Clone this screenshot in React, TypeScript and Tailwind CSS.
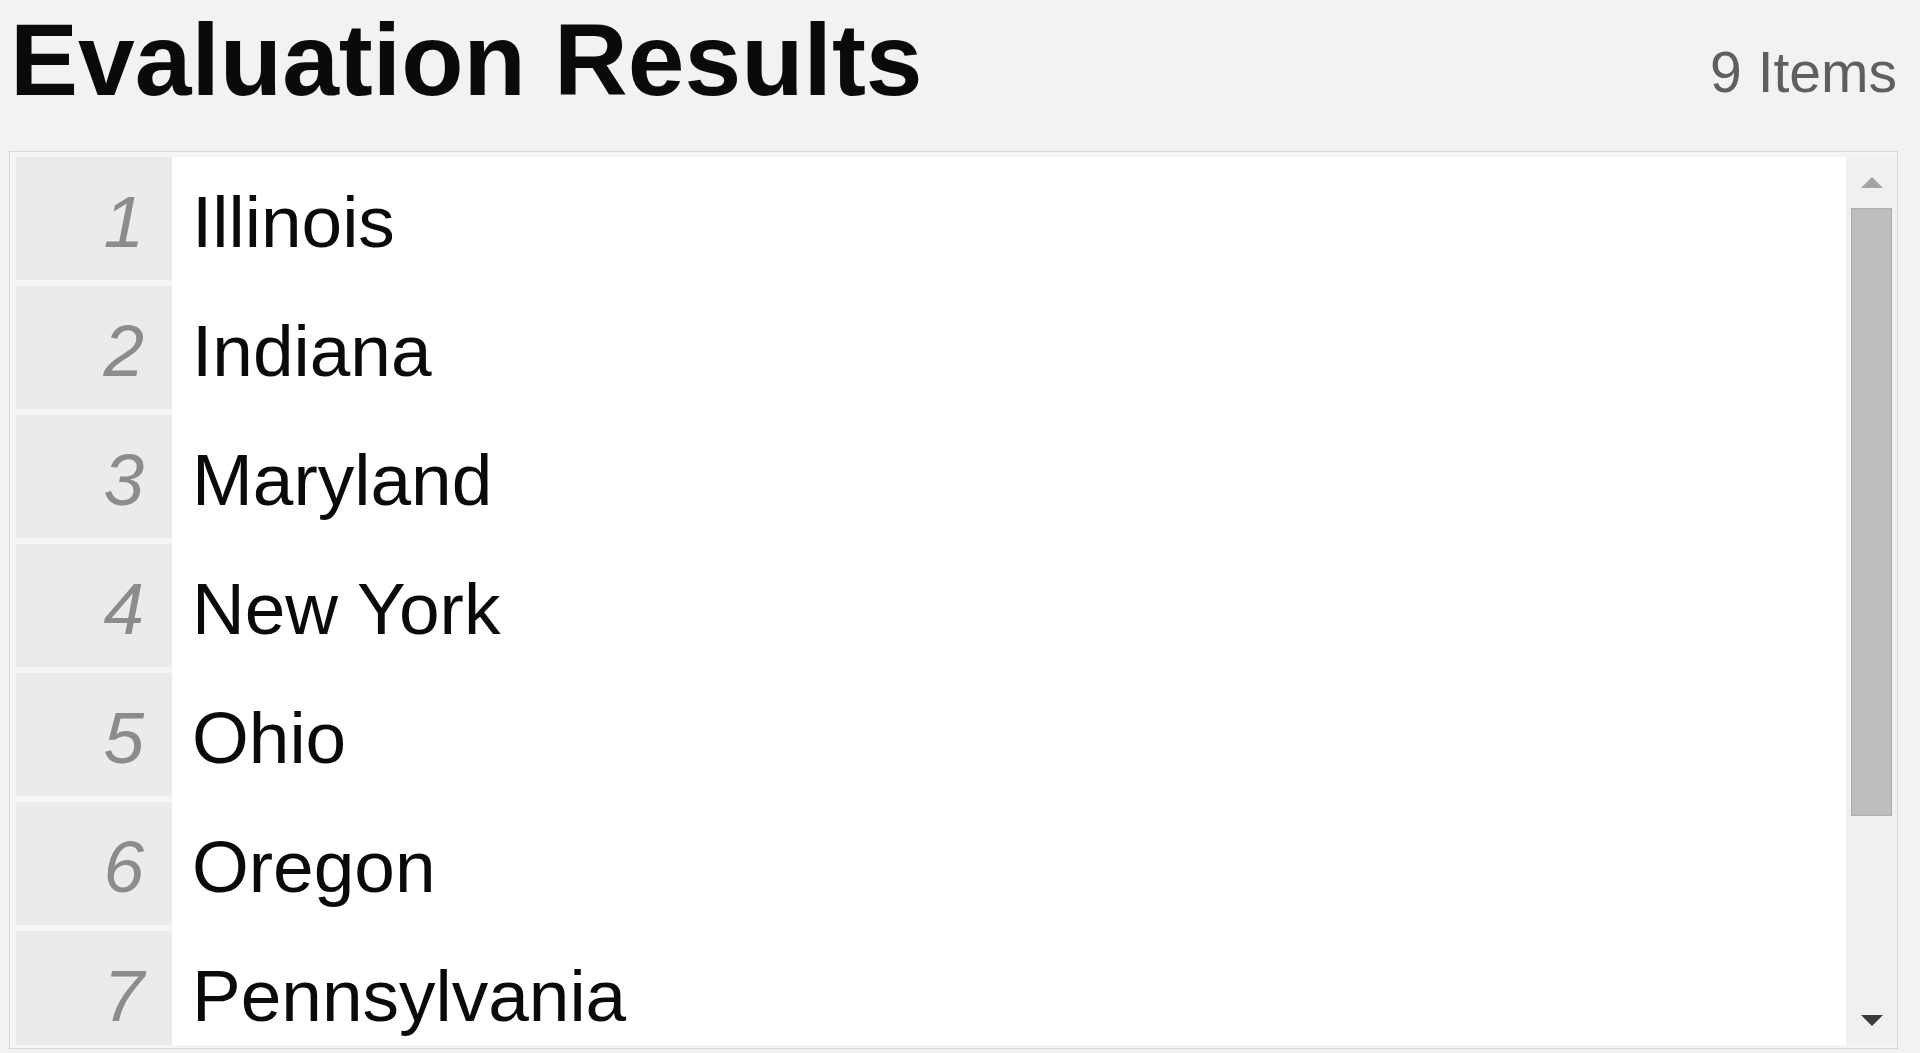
const states = [
  "Illinois",
  "Indiana",
  "Maryland",
  "New York",
  "Ohio",
  "Oregon",
  "Pennsylvania",
  "Texas",
  "Washington",
];

function Triangle({ up, color }: { up?: boolean; color: string }) {
  return (
    <svg width="26" height="13" viewBox="0 0 26 13" aria-hidden="true">
      {up ? (
        <path d="M13 1 L24 12 L2 12 Z" fill={color} />
      ) : (
        <path d="M2 1 L24 1 L13 12 Z" fill={color} />
      )}
    </svg>
  );
}

function Scrollbar() {
  return (
    <div className="flex w-[51px] shrink-0 flex-col bg-[#f0f0f0]">
      <div className="flex h-[50px] items-center justify-center">
        <Triangle up color="#a3a3a3" />
      </div>
      <div className="mx-[5px] mt-[1px] h-[608px] border border-[#aeaeae] bg-[#bdbdbd]" />
      <div className="flex-1" />
      <div className="flex h-[50px] items-center justify-center">
        <Triangle color="#3a3a3a" />
      </div>
    </div>
  );
}

export default function App() {
  return (
    <div
      className="h-screen overflow-hidden bg-[#f2f2f2]"
      style={{ fontFamily: '"Liberation Sans", Arial, sans-serif' }}
    >
      <header className="flex items-start justify-between pt-[9px] pl-[10px] pr-[23px]">
        <h1 className="text-[102px] leading-none font-bold text-[#0a0a0a]">Evaluation Results</h1>
        <span className="mt-[35px] text-[57px] leading-none text-[#5f5f5f]">9 Items</span>
      </header>

      <section className="mt-[40px] mr-[22px] ml-[9px] flex h-[898px] border border-[#d9d9d9] bg-[#f5f5f5] pt-[5px] pb-[3px] pl-[6px]">
        <ul className="flex-1 overflow-hidden bg-white">
          {states.map((name, i) => (
            <li key={name} className="flex h-[129px]">
              <div className="flex w-[156px] shrink-0 items-center justify-end border-b-[6px] border-[#f5f5f5] bg-[#ebebeb] pt-[6px] pr-[28px] text-[73px] leading-none italic text-[#8c8c8c]">
                {i + 1}
              </div>
              <div className="flex flex-1 items-center pb-[6px] pl-[20px] text-[73px] leading-none text-[#0a0a0a]">
                <span className="pt-[6px]">{name}</span>
              </div>
            </li>
          ))}
        </ul>
        <Scrollbar />
      </section>
    </div>
  );
}
